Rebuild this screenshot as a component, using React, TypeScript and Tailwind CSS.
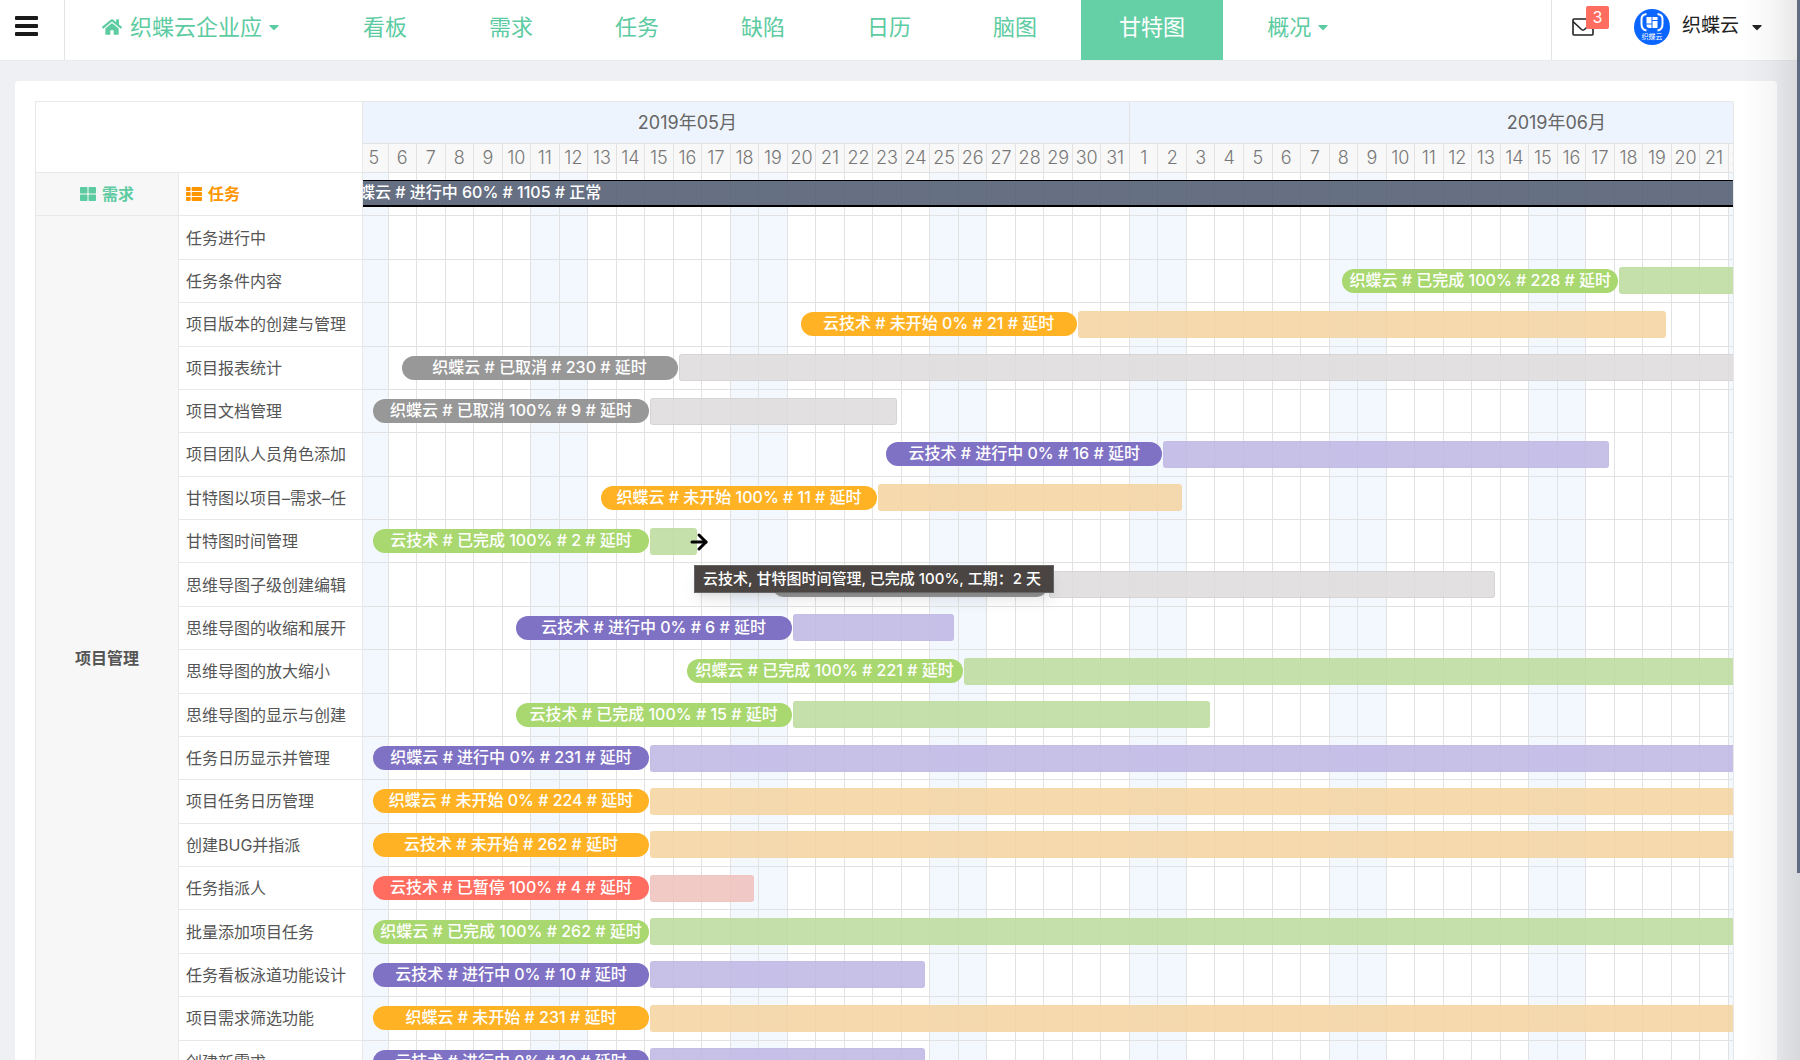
import { FaHome, FaCaretDown, FaThLarge, FaThList } from 'react-icons/fa'
import { ArrowRight } from 'lucide-react'

type Status = 'done' | 'todo' | 'cancel' | 'doing' | 'paused'

interface Task {
  name: string
  status?: Status
  label?: string
  start?: number
  days?: number
  tip?: string
}

const navItems = [
  { label: '看板' },
  { label: '需求' },
  { label: '任务' },
  { label: '缺陷' },
  { label: '日历' },
  { label: '脑图' },
  { label: '甘特图', active: true },
  { label: '概况', caret: true },
]

const tasks: Task[] = [
  { name: '任务进行中' },
  { name: '任务条件内容', status: 'done', label: '织蝶云 # 已完成 100% # 228 # 延时', start: 34, days: 228 },
  { name: '项目版本的创建与管理', status: 'todo', label: '云技术 # 未开始 0% # 21 # 延时', start: 15, days: 21 },
  { name: '项目报表统计', status: 'cancel', label: '织蝶云 # 已取消 # 230 # 延时', start: 1, days: 230 },
  { name: '项目文档管理', status: 'cancel', label: '织蝶云 # 已取消 100% # 9 # 延时', start: 0, days: 9 },
  { name: '项目团队人员角色添加', status: 'doing', label: '云技术 # 进行中 0% # 16 # 延时', start: 18, days: 16 },
  { name: '甘特图以项目–需求–任', status: 'todo', label: '织蝶云 # 未开始 100% # 11 # 延时', start: 8, days: 11 },
  { name: '甘特图时间管理', status: 'done', label: '云技术 # 已完成 100% # 2 # 延时', start: 0, days: 2, tip: '云技术, 甘特图时间管理, 已完成 100%, 工期：2 天' },
  { name: '思维导图子级创建编辑', status: 'cancel', label: '', start: 14, days: 16 },
  { name: '思维导图的收缩和展开', status: 'doing', label: '云技术 # 进行中 0% # 6 # 延时', start: 5, days: 6 },
  { name: '思维导图的放大缩小', status: 'done', label: '织蝶云 # 已完成 100% # 221 # 延时', start: 11, days: 221 },
  { name: '思维导图的显示与创建', status: 'done', label: '云技术 # 已完成 100% # 15 # 延时', start: 5, days: 15 },
  { name: '任务日历显示并管理', status: 'doing', label: '织蝶云 # 进行中 0% # 231 # 延时', start: 0, days: 231 },
  { name: '项目任务日历管理', status: 'todo', label: '织蝶云 # 未开始 0% # 224 # 延时', start: 0, days: 224 },
  { name: '创建BUG并指派', status: 'todo', label: '云技术 # 未开始 # 262 # 延时', start: 0, days: 262 },
  { name: '任务指派人', status: 'paused', label: '云技术 # 已暂停 100% # 4 # 延时', start: 0, days: 4 },
  { name: '批量添加项目任务', status: 'done', label: '织蝶云 # 已完成 100% # 262 # 延时', start: 0, days: 262 },
  { name: '任务看板泳道功能设计', status: 'doing', label: '云技术 # 进行中 0% # 10 # 延时', start: 0, days: 10 },
  { name: '项目需求筛选功能', status: 'todo', label: '织蝶云 # 未开始 # 231 # 延时', start: 0, days: 231 },
  { name: '创建新需求', status: 'doing', label: '云技术 # 进行中 0% # 10 # 延时', start: 0, days: 10 },
]

const pillColor: Record<Status, string> = {
  done: 'bg-[#a8d86f]',
  todo: 'bg-[#ffb324]',
  cancel: 'bg-[#989898]',
  doing: 'bg-[#7f71c4]',
  paused: 'bg-[#ff6c60]',
}

const barColor: Record<Status, string> = {
  done: 'bg-[#bbdb9b]/85 border-[#bbdb9b]/30',
  todo: 'bg-[#f5d4a0]/85 border-[#f5d4a0]/30',
  cancel: 'bg-[#dddbdb]/85 border-[#cfcfcf]/60',
  doing: 'bg-[#bdb5e3]/85 border-[#bdb5e3]/30',
  paused: 'bg-[#eebfbb]/85 border-[#eebfbb]/30',
}

// 5月5日 ~ 6月22日
const DAYS = 49
const MAY_DAYS = 27
const days = Array.from({ length: DAYS }, (_, i) => ({
  num: i < MAY_DAYS ? i + 5 : i - MAY_DAYS + 1,
  weekend: i % 7 === 0 || i % 7 === 6,
}))

const pct = (n: number) => `${(n / DAYS) * 100}%`

function DayGrid() {
  return (
    <div className="absolute inset-y-0 -left-[3px] -right-[24px] flex">
      {days.map((d, i) => (
        <div key={i} className={`flex-1 border-r border-[#e2e2e2] ${d.weekend ? 'bg-[#f3f8fe]' : ''}`} />
      ))}
    </div>
  )
}

function TaskBar({ task }: { task: Task }) {
  if (!task.status) return null
  return (
    <div className="absolute inset-y-0 -left-[3px] -right-[24px] flex items-center">
      <div className="w-[13px] shrink-0" />
      <div className="shrink-0" style={{ width: pct(task.start!) }} />
      <div className={`relative z-10 h-6 w-[276px] shrink-0 rounded-full text-center text-base leading-[22px] font-medium text-white whitespace-nowrap ${pillColor[task.status]}`}>
        {task.label}
      </div>
      <div className={`ml-px h-[27px] shrink-0 rounded-[3px] border ${barColor[task.status]}`} style={{ width: pct(task.days! - 0.35) }} />
    </div>
  )
}

function Logo() {
  return (
    <svg viewBox="0 0 36 36" className="size-9">
      <circle cx="18" cy="18" r="18" fill="#0a66ff" />
      <g fill="none" stroke="#fff" strokeWidth="2">
        <path d="M12.500 5C8.500 5.500 7.500 7 7.500 10v5c0 4 1 6 5 6.500" />
        <path d="M23.500 5c4 .5 5 2 5 5v5c0 4-1 6-5 6.500" />
      </g>
      <path fill="#fff" d="M12.500 8h5v6.500h-5zM18.500 8h5v3h-5zM18.500 12h5v7h-5zM12.500 15.500h5V19h-2c-2 0-3-1-3-3z" />
      <text x="18" y="30" textAnchor="middle" fontSize="7" fill="#fff" fontFamily="Noto Sans CJK SC, sans-serif">织蝶云</text>
    </svg>
  )
}

function MailIcon() {
  return (
    <svg viewBox="0 0 22 18" className="h-[18px] w-[22px]" fill="none" stroke="#222" strokeWidth="1.6" strokeLinejoin="round">
      <rect x="1" y="1" width="20" height="16" rx="1" />
      <path d="M1 3.500l8.500 8q1.500 1.200 3 0l8.500-8" />
    </svg>
  )
}

function TopBar() {
  return (
    <header className="flex h-[61px] border-b border-[#eaebee] bg-white">
      <button aria-label="菜单" className="flex w-[65px] shrink-0 flex-col gap-1 border-r border-[#e4e4e4] pt-4 pl-[15px]">
        <span className="h-1 w-[23px] rounded-[1px] bg-[#1a1a1a]" />
        <span className="h-1 w-[23px] rounded-[1px] bg-[#1a1a1a]" />
        <span className="h-1 w-[23px] rounded-[1px] bg-[#1a1a1a]" />
      </button>

      <nav className="flex flex-1 gap-[6px] text-[22px] text-[#5dcba1]">
        <a href="#" className="flex items-center px-[37px] pb-[6px]">
          <FaHome className="mr-2 size-5" />
          织蝶云企业应
          <FaCaretDown className="ml-1 size-4" />
        </a>
        {navItems.map((item) => (
          <a key={item.label} href="#" className={`flex items-center px-[38px] pb-[6px] ${item.active ? 'bg-[#65cfa6] text-white' : ''}`}>
            {item.label}
            {item.caret && <FaCaretDown className="ml-1 size-4" />}
          </a>
        ))}
      </nav>

      <div className="flex w-[249px] shrink-0 items-center border-l border-[#e4e4e4] pb-[7px] pl-5">
        <button aria-label="消息" className="relative mr-[40px]">
          <MailIcon />
          <span className="absolute -top-3 left-[14px] flex h-[23px] w-[23px] items-center justify-center rounded-[2px] bg-[#ff6c60] text-base text-white">3</span>
        </button>
        <button className="flex items-center text-[19px] text-[#222]">
          <Logo />
          <span className="ml-3">织蝶云</span>
          <FaCaretDown className="ml-[10px] size-4" />
        </button>
      </div>
    </header>
  )
}

export default function App() {
  return (
    <div className="relative h-screen overflow-hidden bg-[#eff0f4] font-['Inter','Noto_Sans_CJK_SC',sans-serif]">
      <TopBar />

      <main className="mt-5 mr-[23px] ml-[15px] rounded-[4px] bg-white py-5 pr-[43px] pl-5">
        <table className="h-[984px] w-full table-fixed border-separate border-spacing-0 border border-[#e8e8e8]">
          <colgroup>
            <col className="w-[143px]" />
            <col className="w-[184px]" />
            <col />
          </colgroup>
          <thead>
            <tr className="h-[71px]">
              <td colSpan={2} className="border-r border-b border-[#e8e8e8]" />
              <td className="relative overflow-hidden border-b border-[#e2e2e2] p-0">
                <div className="absolute inset-y-0 -left-[3px] -right-[24px] flex flex-col text-lg">
                  <div className="flex h-[42px] border-b border-[#e2e2e2] bg-[#edf4fd] text-[#666]">
                    <div className="flex items-center justify-center border-r border-[#e2e2e2] pr-[114px]" style={{ width: pct(MAY_DAYS) }}>
                      2019年05月
                    </div>
                    <div className="flex flex-1 items-center justify-center pl-[226px]">2019年06月</div>
                  </div>
                  <div className="flex flex-1 bg-[#f8f8f8] font-light text-[#777]">
                    {days.map((d, i) => (
                      <div key={i} className="flex flex-1 basis-0 items-center justify-center border-r border-[#e2e2e2]">{d.num}</div>
                    ))}
                  </div>
                </div>
              </td>
            </tr>
          </thead>
          <tbody className="text-base text-[#555]">
            <tr>
              <th className="border-r border-b border-[#e8e8e8] bg-[#f7f7f7] p-0 text-[#5dcba1]">
                <span className="flex items-center justify-center gap-[6px]">
                  <FaThLarge />
                  需求
                </span>
              </th>
              <th className="border-r border-b border-[#e8e8e8] p-0 pl-[7px] text-[#ff9500]">
                <span className="flex items-center gap-[6px]">
                  <FaThList />
                  任务
                </span>
              </th>
              <td className="relative overflow-hidden border-b border-[#e2e2e2] p-0">
                <DayGrid />
                <div className="absolute inset-x-0 top-[7px] h-[27px] border-t border-b-2 border-black bg-[#566175]/90">
                  <span className="-ml-5 block text-base leading-[23px] font-medium whitespace-nowrap text-white">织蝶云 # 进行中 60% # 1105 # 正常</span>
                </div>
              </td>
            </tr>
            {tasks.map((task, i) => (
              <tr key={task.name}>
                {i === 0 && (
                  <th rowSpan={tasks.length} className="border-r border-[#e8e8e8] bg-[#f7f7f7] p-0 pt-4">项目管理</th>
                )}
                <td className="border-r border-b border-[#e8e8e8] p-0 pl-[7px] whitespace-nowrap">{task.name}</td>
                <td className="relative border-b border-[#e2e2e2] p-0">
                  <div className="absolute inset-0 overflow-hidden">
                    <DayGrid />
                    <TaskBar task={task} />
                  </div>
                  {task.tip && (
                    <>
                      <ArrowRight className="absolute top-[10px] left-[324px] z-20 size-6" color="#000" strokeWidth={3} />
                      <div className="absolute top-[45px] left-[331px] z-20 border border-[#666] bg-[#4a4542] pr-3 pl-2 text-[15px] leading-[26px] font-medium whitespace-nowrap text-white shadow-lg">
                        {task.tip}
                      </div>
                    </>
                  )}
                </td>
              </tr>
            ))}
          </tbody>
        </table>
      </main>

      {/* 右侧边缘阴影与滚动条 */}
      <div className="pointer-events-none absolute inset-y-0 right-0 w-[60px] bg-gradient-to-r from-transparent via-black/3 to-black/10" />
      <div className="absolute top-0 right-0 h-[873px] w-[3px] bg-[#5f6b80]" />
    </div>
  )
}
